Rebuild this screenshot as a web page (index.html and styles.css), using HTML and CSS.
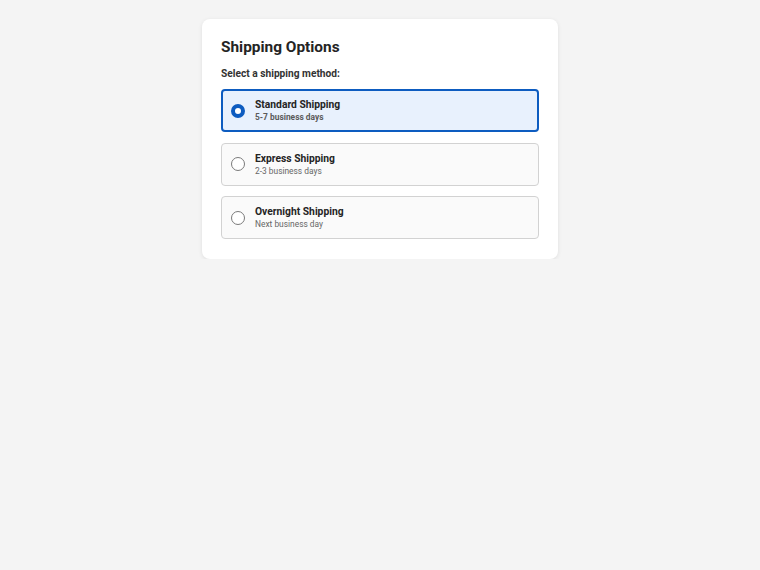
FILE: index.html
```html
<!DOCTYPE html>
<html lang="en">
<head>
<meta charset="utf-8">
<title>Shipping Options</title>
<link rel="stylesheet" href="styles.css">
</head>
<body>
  <main class="card">
    <h1 class="card-title">Shipping Options</h1>
    <p class="field-label">Select a shipping method:</p>
    <div class="options" role="radiogroup">
      <label class="option option--selected">
        <span class="radio radio--checked"></span>
        <span class="option-text">
          <span class="option-name">Standard Shipping</span>
          <span class="option-desc">5-7 business days</span>
        </span>
      </label>
      <label class="option">
        <span class="radio"></span>
        <span class="option-text">
          <span class="option-name">Express Shipping</span>
          <span class="option-desc">2-3 business days</span>
        </span>
      </label>
      <label class="option">
        <span class="radio"></span>
        <span class="option-text">
          <span class="option-name">Overnight Shipping</span>
          <span class="option-desc">Next business day</span>
        </span>
      </label>
    </div>
  </main>
</body>
</html>
```

FILE: styles.css
```css
* { box-sizing: border-box; }

body {
  margin: 0;
  background: #f4f4f4;
  font-family: Roboto, "Liberation Sans", Arial, sans-serif;
  color: #222;
  display: flex;
  justify-content: center;
  padding-top: 19px;
}

.card {
  width: 356px;
  background: #fff;
  border-radius: 8px;
  box-shadow: 0 1px 4px rgba(0, 0, 0, 0.09);
  padding: 18px 19px 20px;
}

.card-title {
  margin: 0;
  font-size: 15.4px;
  font-weight: 700;
  line-height: 20px;
  color: #242424;
}

.field-label {
  margin: 9.5px 0 8.5px;
  font-size: 10.2px;
  font-weight: 700;
  line-height: 14px;
  color: #333;
}

.options {
  display: flex;
  flex-direction: column;
  gap: 10.5px;
}

.option {
  display: flex;
  align-items: center;
  gap: 10px;
  height: 43px;
  padding: 0 9px;
  border: 1px solid #d2d2d2;
  border-radius: 4px;
  background: #fafafa;
}

.option--selected {
  border: 2px solid #0d5cc0;
  padding: 0 8px;
  background: #e8f1fd;
}

.radio {
  flex: none;
  width: 14px;
  height: 14px;
  border-radius: 50%;
  border: 1.5px solid #7a7a7a;
  background: #fff;
}

.radio--checked {
  border: 4.8px solid #0d5cc0;
}

.option-text {
  display: flex;
  flex-direction: column;
  padding-top: 1px;
}

.option-name {
  font-size: 10.3px;
  font-weight: 700;
  line-height: 13px;
  color: #242424;
}

.option-desc {
  font-size: 8.4px;
  line-height: 13px;
  color: #666;
}

.option--selected .option-desc {
  font-weight: 700;
  color: #5a5a5a;
}
```
